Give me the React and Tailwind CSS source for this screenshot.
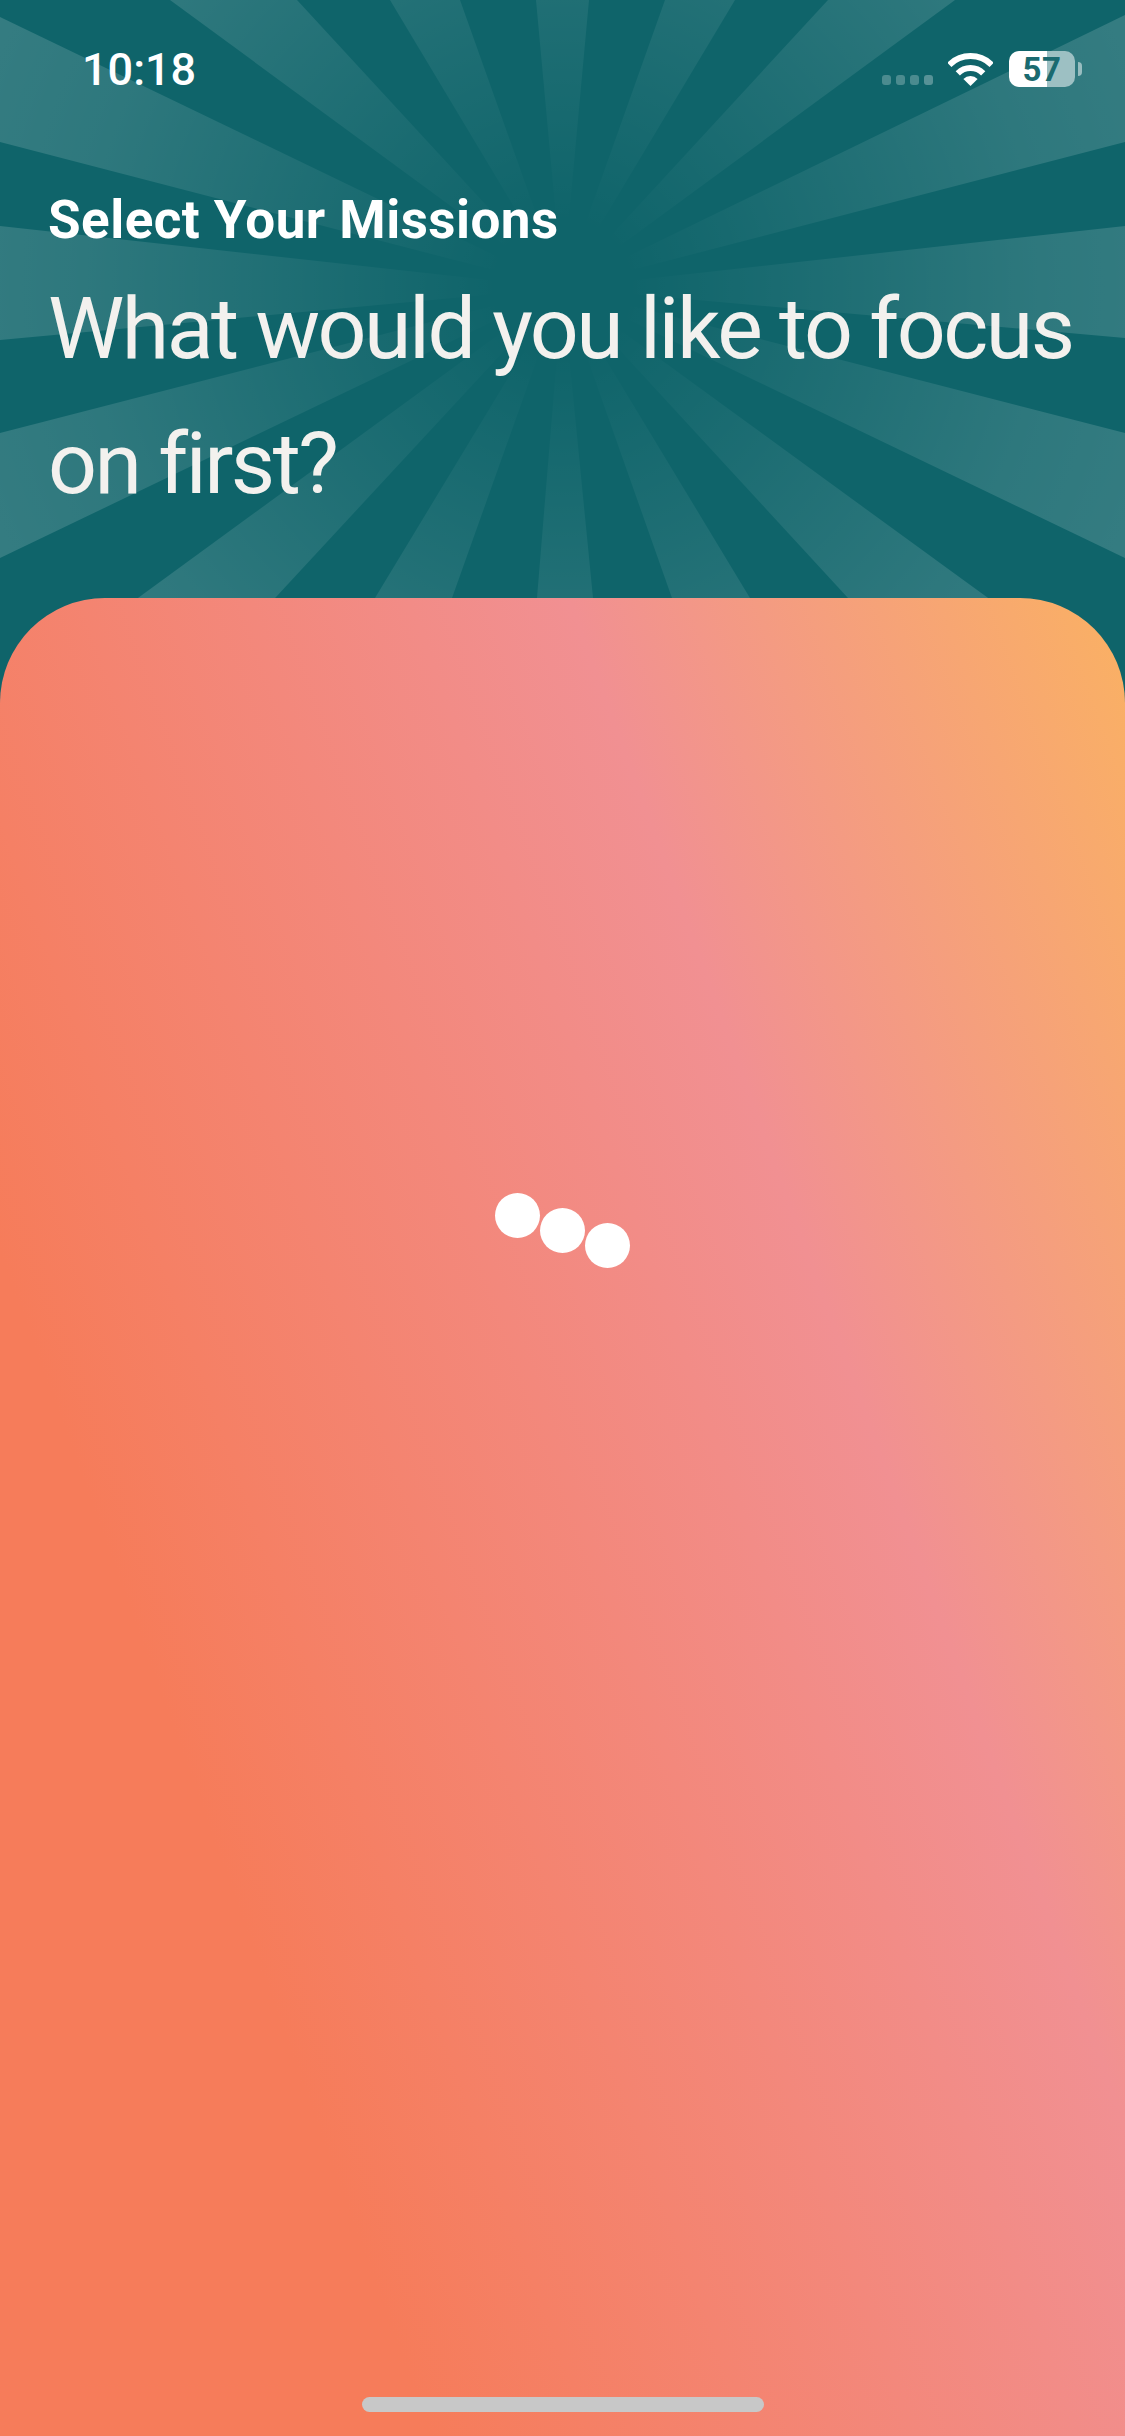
import React from 'react'

// each ray: two points on the screen edge / card top, in page pixels
const CENTER = [562.5, 288]
const RAYS = [
  [[170, 0], [297, 0]],
  [[390, 0], [460, 0]],
  [[536, 0], [589, 0]],
  [[665, 0], [735, 0]],
  [[828, 0], [955, 0]],
  [[1125, 15], [1125, 142]],
  [[1125, 226], [1125, 338]],
  [[1125, 433], [1125, 558]],
  [[988, 598], [848, 598]],
  [[750, 598], [672, 598]],
  [[593, 598], [537, 598]],
  [[452, 598], [375, 598]],
  [[275, 598], [138, 598]],
  [[0, 558], [0, 433]],
  [[0, 340], [0, 226]],
  [[0, 142], [0, 17]],
]

const far = ([x, y]) => `${CENTER[0] + (x - CENTER[0]) * 3},${CENTER[1] + (y - CENTER[1]) * 3}`

function Sunburst() {
  return (
    <svg className="absolute left-0 top-0 w-[1125px] h-[720px]" viewBox="0 0 1125 720">
      <defs>
        <radialGradient id="ray" gradientUnits="userSpaceOnUse" cx="562.5" cy="288" r="640">
          <stop offset="0.1" stopColor="#fff" stopOpacity="0" />
          <stop offset="0.3" stopColor="#fff" stopOpacity="0.04" />
          <stop offset="0.5" stopColor="#fff" stopOpacity="0.08" />
          <stop offset="0.75" stopColor="#fff" stopOpacity="0.13" />
          <stop offset="1" stopColor="#fff" stopOpacity="0.16" />
        </radialGradient>
      </defs>
      {RAYS.map(([a, b], i) => (
        <polygon key={i} points={`${CENTER[0]},${CENTER[1]} ${far(a)} ${far(b)}`} fill="url(#ray)" />
      ))}
    </svg>
  )
}

function StatusBar() {
  return (
    <div className="relative flex items-center justify-between h-[138px] pl-[82px] pr-[43px] text-white">
      <span className="text-[45px] leading-none font-medium">10:18</span>
      <div className="flex items-center">
        <div className="flex gap-[5px] mt-[22px] mr-[15px]">
          <span className="w-[9px] h-[10px] rounded-[3px] bg-white/25" />
          <span className="w-[9px] h-[10px] rounded-[3px] bg-white/25" />
          <span className="w-[9px] h-[10px] rounded-[3px] bg-white/25" />
          <span className="w-[9px] h-[10px] rounded-[3px] bg-white/30" />
        </div>
        <svg className="w-[45px] h-[33px] mr-[16px]" viewBox="0 0 45 33" fill="none">
          <path d="M1.3 11.8A30 30 0 0 1 43.7 11.8" stroke="#fff" strokeWidth="6" />
          <path d="M9.8 20.3A18 18 0 0 1 35.2 20.3" stroke="#fff" strokeWidth="6" />
          <path d="M22.5 33L15.4 25.9A10 10 0 0 1 29.6 25.9Z" fill="#fff" />
        </svg>
        <div className="flex items-center w-[66px] h-[36px] justify-center rounded-[10px] bg-[linear-gradient(90deg,#ffffff_57%,#9dc0c3_57%)] text-[33px] leading-none font-bold tracking-[0.5px] text-[#1a6a70]">
          57
        </div>
        <span className="w-[4px] h-[14px] ml-[3px] rounded-r-full bg-white/50" />
      </div>
    </div>
  )
}

export default function App() {
  return (
    <div className="relative flex flex-col w-full h-[2436px] overflow-hidden bg-[#0f646a] font-[Roboto,sans-serif]">
      <Sunburst />
      <div className="relative h-[598px]">
        <StatusBar />
        <div className="mt-[52px] pl-[48px]">
          <div className="text-[53px] leading-[60px] font-bold tracking-[0.45px] text-white">Select Your Missions</div>
          <h1 className="mt-[11px] w-[1060px] text-[86px] leading-[135px] font-normal tracking-[-2.5px] text-[#f3f1ee]">
            What would you like to focus on first?
          </h1>
        </div>
      </div>
      <div className="relative flex flex-col flex-1 items-center justify-between pt-[610px] pb-[24px] rounded-t-[105px] bg-[linear-gradient(70deg,#f67c5a_24%,#f19092_69%,#fab163_100%)]">
        <div className="flex">
          <span className="w-[45px] h-[45px] rounded-full bg-white -translate-y-[15px]" />
          <span className="w-[45px] h-[45px] rounded-full bg-white" />
          <span className="w-[45px] h-[45px] rounded-full bg-white translate-y-[15px]" />
        </div>
        <div className="w-[402px] h-[15px] rounded-full bg-[#c8c8c8]" />
      </div>
    </div>
  )
}
